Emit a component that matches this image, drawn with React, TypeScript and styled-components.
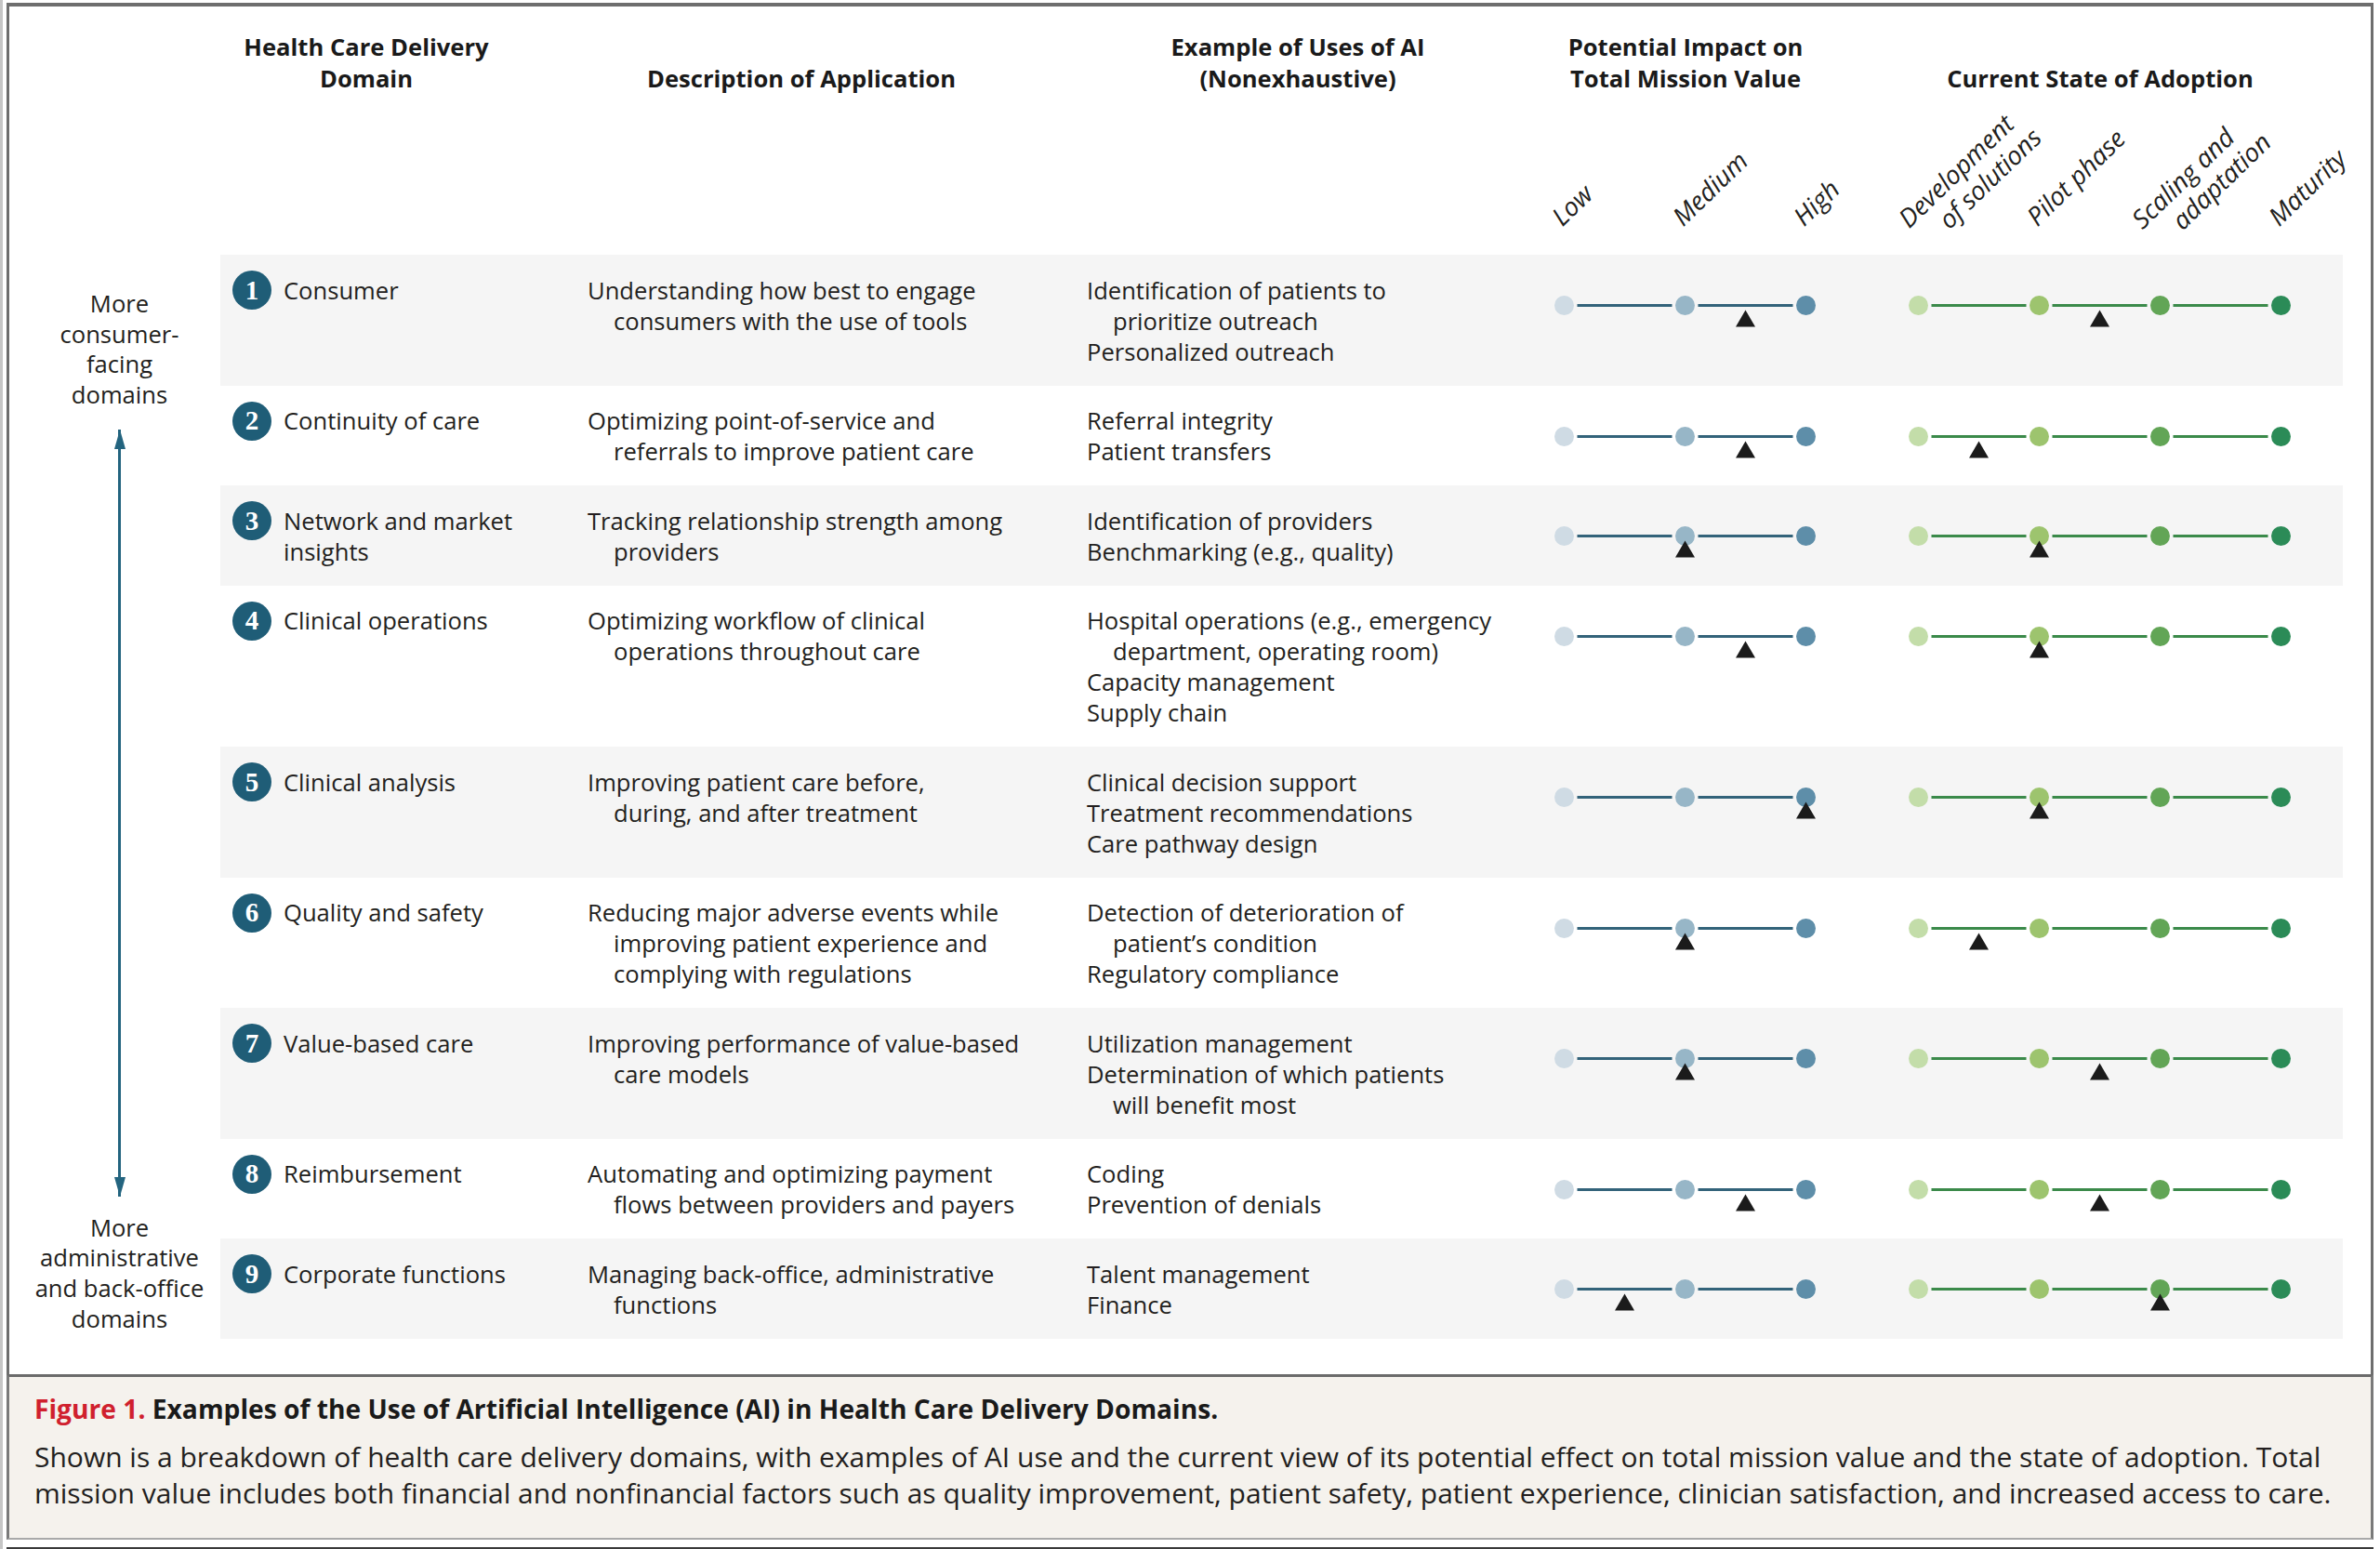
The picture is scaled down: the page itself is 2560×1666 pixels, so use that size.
import React from 'react';
import styled, { createGlobalStyle } from 'styled-components';

const GlobalStyle = createGlobalStyle`
  html, body { margin: 0; padding: 0; background: #ffffff; }
  body {
    font-family: 'Open Sans', 'Noto Sans', 'DejaVu Sans', sans-serif;
    color: #231f20;
  }
  #root { width: 2560px; height: 1666px; }
`;

const SPACING = 130;
const DOT = 21;
const COLS = '382px 537px 503px 381px 411px';

const Page = styled.div`
  width: 2560px;
  height: 1666px;
  box-sizing: border-box;
  border-left: 3px solid #c6c6c6;
  padding: 3px 7px 0 4px;
  display: flex;
  flex-direction: column;
  overflow: hidden;
`;

const Figure = styled.section`
  border-style: solid;
  border-color: #6e6e6e;
  border-width: 4px 3px 0 3px;
  padding: 27px 30px 38px 10px;
  display: flex;
  flex-direction: column;
`;

const Header = styled.header`
  padding-left: 217px;
  display: flex;
  flex-direction: column;
`;

const TitleGrid = styled.div`
  display: grid;
  grid-template-columns: 314px 622px 446px 388px 504px;
  align-items: end;
`;

const ColTitle = styled.div`
  text-align: center;
  font-weight: 700;
  font-size: 25.6px;
  line-height: 34px;
  color: #1a1a1a;
`;

const LabelZone = styled.div`
  height: 172px;
  display: grid;
  grid-template-columns: ${COLS};
  padding-left: 13px;
`;

const LabelTrack = styled.div`
  position: relative;
  height: 100%;
`;

const AxisLabel = styled.div<{ $x: number; $b: number }>`
  position: absolute;
  left: ${(p) => p.$x}px;
  bottom: ${(p) => p.$b}px;
  width: 0;
  height: 0;
`;

const LabelText = styled.div`
  position: absolute;
  left: 0;
  top: -31px;
  transform-origin: 0 31px;
  transform: rotate(-44deg);
  white-space: nowrap;
  font-style: italic;
  font-size: 27.5px;
  line-height: 31px;
  color: #231f20;
`;

const LabelLine = styled.div<{ $indent?: boolean }>`
  padding-left: ${(p) => (p.$indent ? 30 : 0)}px;
`;

const Body = styled.div`
  display: flex;
`;

const Axis = styled.div`
  width: 217px;
  flex: none;
  display: flex;
  flex-direction: column;
  align-items: center;
  padding: 37px 0 4px;
  box-sizing: border-box;
`;

const AxisText = styled.div`
  text-align: center;
  font-size: 25.6px;
  line-height: 32.7px;
  white-space: nowrap;
`;

const Arrow = styled.div`
  flex: 1;
  width: 3px;
  margin: 20px 0 18px;
  background: #23647f;
  position: relative;
  &::before,
  &::after {
    content: '';
    position: absolute;
    left: 50%;
    transform: translateX(-50%);
    border-left: 6.5px solid transparent;
    border-right: 6.5px solid transparent;
  }
  &::before {
    top: 0;
    border-bottom: 21px solid #23647f;
  }
  &::after {
    bottom: 0;
    border-top: 21px solid #23647f;
  }
`;

const Table = styled.div`
  flex: 1;
  display: flex;
  flex-direction: column;
`;

const Row = styled.div<{ $shaded: boolean }>`
  display: grid;
  grid-template-columns: ${COLS};
  align-items: start;
  padding: 21.5px 0 20px 13px;
  background: ${(p) => (p.$shaded ? '#f5f5f5' : 'transparent')};
  font-size: 25.6px;
  line-height: 33px;
`;

const DomainCell = styled.div`
  display: flex;
  align-items: flex-start;
  gap: 13px;
`;

const Badge = styled.div`
  width: 42px;
  height: 42px;
  margin-top: -4.5px;
  margin-bottom: -4.5px;
  flex: none;
  border-radius: 50%;
  background: #1f5d77;
  color: #ffffff;
  display: flex;
  align-items: center;
  justify-content: center;
  font-family: 'Liberation Serif', 'DejaVu Serif', serif;
  font-weight: 700;
  font-size: 29px;
  line-height: 1;
`;

const TextCell = styled.div`
  white-space: nowrap;
`;

const Line = styled.div<{ $indent?: boolean }>`
  padding-left: ${(p) => (p.$indent ? 28 : 0)}px;
`;

const ScaleCell = styled.div`
  margin-top: 21.5px;
  height: 40px;
  line-height: 0;
  & > svg {
    display: block;
  }
`;

const Caption = styled.section`
  border-style: solid;
  border-color: #6b6b6b #7a7a7a #a9a9a9 #7a7a7a;
  border-width: 3px 3px 2px 3px;
  background: #f5f2ed;
  padding: 15.5px 20px 28.5px 27px;
  font-size: 30px;
  line-height: 39px;
  color: #231f20;
  white-space: nowrap;
`;

const CaptionTitle = styled.div`
  font-weight: 700;
  font-size: 28.2px;
  color: #1a1a1a;
  margin-bottom: 12px;
`;

const FigNum = styled.span`
  color: #d0202e;
`;

const BottomRule = styled.div`
  margin-top: 8px;
  height: 3px;
  background: #3a3a3a;
`;

type ScaleProps = { colors: string[]; line: string; pos: number };

const Scale: React.FC<ScaleProps> = ({ colors, line, pos }) => {
  const n = colors.length;
  const w = (n - 1) * SPACING + DOT;
  const cy = 11.5;
  const r = DOT / 2;
  const tx = r + pos * SPACING;
  return (
    <svg width={w} height={40} viewBox={`0 0 ${w} 40`}>
      {colors.slice(0, -1).map((_, i) => {
        const x1 = r + i * SPACING + r + 3.5;
        const x2 = r + (i + 1) * SPACING - r - 3.5;
        return <line key={`l${i}`} x1={x1} x2={x2} y1={cy} y2={cy} stroke={line} strokeWidth={2.8} />;
      })}
      {colors.map((c, i) => (
        <circle key={`c${i}`} cx={r + i * SPACING} cy={cy} r={r} fill={c} />
      ))}
      <polygon
        points={`${tx},${cy + 5} ${tx - 10.5},${cy + 23} ${tx + 10.5},${cy + 23}`}
        fill="#1b1b1b"
      />
    </svg>
  );
};

const BLUE = ['#cfdbe4', '#97b6c7', '#5e8ea9'];
const GREEN = ['#c3dda9', '#9dc46e', '#62a556', '#2b8b57'];

type LabelDef = { lines: string[]; dx: number; b: number };

const impactLabels: LabelDef[] = [
  { lines: ['Low'], dx: 1, b: 26.5 },
  { lines: ['Medium'], dx: 1, b: 26.5 },
  { lines: ['High'], dx: 1, b: 26.5 },
];

const adoptionLabels: LabelDef[] = [
  { lines: ['Development', 'of solutions'], dx: -7, b: 24.5 },
  { lines: ['Pilot phase'], dx: 1, b: 26.5 },
  { lines: ['Scaling and', 'adaptation'], dx: -16, b: 23.5 },
  { lines: ['Maturity'], dx: 1, b: 26.5 },
];

type RowDef = {
  domain: string[];
  desc: string[];
  examples: string[][];
  impact: number;
  adoption: number;
};

const rows: RowDef[] = [
  {
    domain: ['Consumer'],
    desc: ['Understanding how best to engage', 'consumers with the use of tools'],
    examples: [['Identification of patients to', 'prioritize outreach'], ['Personalized outreach']],
    impact: 1.5,
    adoption: 1.5,
  },
  {
    domain: ['Continuity of care'],
    desc: ['Optimizing point-of-service and', 'referrals to improve patient care'],
    examples: [['Referral integrity'], ['Patient transfers']],
    impact: 1.5,
    adoption: 0.5,
  },
  {
    domain: ['Network and market', 'insights'],
    desc: ['Tracking relationship strength among', 'providers'],
    examples: [['Identification of providers'], ['Benchmarking (e.g., quality)']],
    impact: 1,
    adoption: 1,
  },
  {
    domain: ['Clinical operations'],
    desc: ['Optimizing workflow of clinical', 'operations throughout care'],
    examples: [
      ['Hospital operations (e.g., emergency', 'department, operating room)'],
      ['Capacity management'],
      ['Supply chain'],
    ],
    impact: 1.5,
    adoption: 1,
  },
  {
    domain: ['Clinical analysis'],
    desc: ['Improving patient care before,', 'during, and after treatment'],
    examples: [['Clinical decision support'], ['Treatment recommendations'], ['Care pathway design']],
    impact: 2,
    adoption: 1,
  },
  {
    domain: ['Quality and safety'],
    desc: ['Reducing major adverse events while', 'improving patient experience and', 'complying with regulations'],
    examples: [['Detection of deterioration of', 'patient\u2019s condition'], ['Regulatory compliance']],
    impact: 1,
    adoption: 0.5,
  },
  {
    domain: ['Value-based care'],
    desc: ['Improving performance of value-based', 'care models'],
    examples: [['Utilization management'], ['Determination of which patients', 'will benefit most']],
    impact: 1,
    adoption: 1.5,
  },
  {
    domain: ['Reimbursement'],
    desc: ['Automating and optimizing payment', 'flows between providers and payers'],
    examples: [['Coding'], ['Prevention of denials']],
    impact: 1.5,
    adoption: 1.5,
  },
  {
    domain: ['Corporate functions'],
    desc: ['Managing back-office, administrative', 'functions'],
    examples: [['Talent management'], ['Finance']],
    impact: 0.5,
    adoption: 2,
  },
];

const Labels: React.FC<{ defs: LabelDef[] }> = ({ defs }) => (
  <LabelTrack>
    {defs.map((d, i) => (
      <AxisLabel key={i} $x={DOT / 2 + i * SPACING + d.dx} $b={d.b}>
        <LabelText>
          {d.lines.map((l, j) => (
            <LabelLine key={j} $indent={j > 0}>
              {l}
            </LabelLine>
          ))}
        </LabelText>
      </AxisLabel>
    ))}
  </LabelTrack>
);

export default function App() {
  return (
    <>
      <GlobalStyle />
      <Page>
        <Figure>
          <Header>
            <TitleGrid>
              <ColTitle>
                Health Care Delivery
                <br />
                Domain
              </ColTitle>
              <ColTitle>Description of Application</ColTitle>
              <ColTitle>
                Example of Uses of AI
                <br />
                (Nonexhaustive)
              </ColTitle>
              <ColTitle>
                Potential Impact on
                <br />
                Total Mission Value
              </ColTitle>
              <ColTitle>Current State of Adoption</ColTitle>
            </TitleGrid>
            <LabelZone>
              <div />
              <div />
              <div />
              <Labels defs={impactLabels} />
              <Labels defs={adoptionLabels} />
            </LabelZone>
          </Header>
          <Body>
            <Axis>
              <AxisText>
                More
                <br />
                consumer-
                <br />
                facing
                <br />
                domains
              </AxisText>
              <Arrow />
              <AxisText>
                More
                <br />
                administrative
                <br />
                and back-office
                <br />
                domains
              </AxisText>
            </Axis>
            <Table>
              {rows.map((r, i) => (
                <Row key={i} $shaded={i % 2 === 0}>
                  <DomainCell>
                    <Badge>{i + 1}</Badge>
                    <TextCell>
                      {r.domain.map((l, j) => (
                        <Line key={j}>{l}</Line>
                      ))}
                    </TextCell>
                  </DomainCell>
                  <TextCell>
                    {r.desc.map((l, j) => (
                      <Line key={j} $indent={j > 0}>
                        {l}
                      </Line>
                    ))}
                  </TextCell>
                  <TextCell>
                    {r.examples.map((item, j) => (
                      <div key={j}>
                        {item.map((l, k) => (
                          <Line key={k} $indent={k > 0}>
                            {l}
                          </Line>
                        ))}
                      </div>
                    ))}
                  </TextCell>
                  <ScaleCell>
                    <Scale colors={BLUE} line="#33637a" pos={r.impact} />
                  </ScaleCell>
                  <ScaleCell>
                    <Scale colors={GREEN} line="#3b8a4a" pos={r.adoption} />
                  </ScaleCell>
                </Row>
              ))}
            </Table>
          </Body>
        </Figure>
        <Caption>
          <CaptionTitle>
            <FigNum>Figure 1.</FigNum> Examples of the Use of Artificial Intelligence (AI) in Health Care Delivery
            Domains.
          </CaptionTitle>
          <div>
            Shown is a breakdown of health care delivery domains, with examples of AI use and the current view of its
            potential effect on total mission value and the state of adoption. Total
          </div>
          <div>
            mission value includes both financial and nonfinancial factors such as quality improvement, patient safety,
            patient experience, clinician satisfaction, and increased access to care.
          </div>
        </Caption>
        <BottomRule />
      </Page>
    </>
  );
}
